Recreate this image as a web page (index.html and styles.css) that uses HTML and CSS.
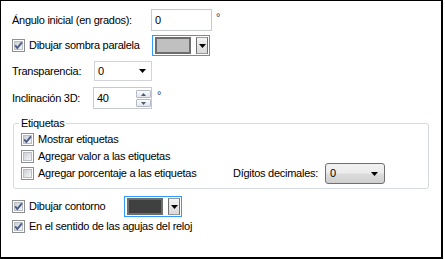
FILE: index.html
```html
<!DOCTYPE html>
<html>
<head>
<meta charset="utf-8">
<link rel="stylesheet" href="styles.css">
</head>
<body>
<svg class="defs" width="0" height="0">
  <defs>
    <linearGradient id="cbg" x1="0" y1="0" x2="1" y2="1">
      <stop offset="0" stop-color="#c9cdd3"/>
      <stop offset="1" stop-color="#f7f8f9"/>
    </linearGradient>
  </defs>
</svg>
<div class="panel">
  <div class="row r1">
    <span class="lbl l1">Ángulo inicial (en grados):</span>
    <div class="textbox tb1">0</div>
    <span class="deg">°</span>
  </div>

  <div class="row r2">
    <div class="chk l2">
      <svg class="cb" width="13" height="13" viewBox="0 0 13 13"><rect x="0.5" y="0.5" width="12" height="12" fill="#fff" stroke="#8e8f8f"/><rect x="2.5" y="2.5" width="8" height="8" fill="url(#cbg)" stroke="#b9bec6"/><path d="M3.2 6.4 L5.3 9 L9.9 3.3" fill="none" stroke="#4b5c87" stroke-width="1.9"/></svg>
      <span>Dibujar sombra paralela</span>
    </div>
    <div class="picker">
      <span class="swatch sw-light"></span>
      <span class="pbtn"><svg width="7" height="4" viewBox="0 0 7 4"><path d="M0 0H7L3.5 4Z" fill="#000"/></svg></span>
    </div>
  </div>

  <div class="row r3">
    <span class="lbl l3">Transparencia:</span>
    <div class="combo">
      <span>0</span>
      <svg width="7" height="4" viewBox="0 0 7 4"><path d="M0 0H7L3.5 4Z" fill="#000"/></svg>
    </div>
  </div>

  <div class="row r4">
    <span class="lbl l4">Inclinación 3D:</span>
    <div class="spin">
      <span class="spin-val">40</span>
      <div class="spin-btns">
        <span class="sbtn"><svg width="5" height="3" viewBox="0 0 5 3"><path d="M0 3H5L2.5 0Z" fill="#4a5a73"/></svg></span>
        <span class="sbtn"><svg width="5" height="3" viewBox="0 0 5 3"><path d="M0 0H5L2.5 3Z" fill="#4a5a73"/></svg></span>
      </div>
    </div>
    <span class="deg deg2">°</span>
  </div>

  <fieldset class="group">
    <legend>Etiquetas</legend>
    <div class="grow">
      <div class="chk">
        <svg class="cb" width="13" height="13" viewBox="0 0 13 13"><rect x="0.5" y="0.5" width="12" height="12" fill="#fff" stroke="#8e8f8f"/><rect x="2.5" y="2.5" width="8" height="8" fill="url(#cbg)" stroke="#b9bec6"/><path d="M3.2 6.4 L5.3 9 L9.9 3.3" fill="none" stroke="#4b5c87" stroke-width="1.9"/></svg>
        <span>Mostrar etiquetas</span>
      </div>
    </div>
    <div class="grow">
      <div class="chk">
        <svg class="cb" width="13" height="13" viewBox="0 0 13 13"><rect x="0.5" y="0.5" width="12" height="12" fill="#fff" stroke="#8e8f8f"/><rect x="2.5" y="2.5" width="8" height="8" fill="url(#cbg)" stroke="#b9bec6"/></svg>
        <span>Agregar valor a las etiquetas</span>
      </div>
    </div>
    <div class="grow">
      <div class="chk">
        <svg class="cb" width="13" height="13" viewBox="0 0 13 13"><rect x="0.5" y="0.5" width="12" height="12" fill="#fff" stroke="#8e8f8f"/><rect x="2.5" y="2.5" width="8" height="8" fill="url(#cbg)" stroke="#b9bec6"/></svg>
        <span>Agregar porcentaje a las etiquetas</span>
      </div>
      <span class="lbl ldec">Dígitos decimales:</span>
      <div class="ddl">
        <span>0</span>
        <svg width="7" height="4" viewBox="0 0 7 4"><path d="M0 0H7L3.5 4Z" fill="#000"/></svg>
      </div>
    </div>
  </fieldset>

  <div class="row r5">
    <div class="chk l5">
      <svg class="cb" width="13" height="13" viewBox="0 0 13 13"><rect x="0.5" y="0.5" width="12" height="12" fill="#fff" stroke="#8e8f8f"/><rect x="2.5" y="2.5" width="8" height="8" fill="url(#cbg)" stroke="#b9bec6"/><path d="M3.2 6.4 L5.3 9 L9.9 3.3" fill="none" stroke="#4b5c87" stroke-width="1.9"/></svg>
      <span>Dibujar contorno</span>
    </div>
    <div class="picker">
      <span class="swatch sw-dark"></span>
      <span class="pbtn"><svg width="7" height="4" viewBox="0 0 7 4"><path d="M0 0H7L3.5 4Z" fill="#000"/></svg></span>
    </div>
  </div>

  <div class="row r6">
    <div class="chk">
      <svg class="cb" width="13" height="13" viewBox="0 0 13 13"><rect x="0.5" y="0.5" width="12" height="12" fill="#fff" stroke="#8e8f8f"/><rect x="2.5" y="2.5" width="8" height="8" fill="url(#cbg)" stroke="#b9bec6"/><path d="M3.2 6.4 L5.3 9 L9.9 3.3" fill="none" stroke="#4b5c87" stroke-width="1.9"/></svg>
      <span>En el sentido de las agujas del reloj</span>
    </div>
  </div>
</div>
</body>
</html>
```

FILE: styles.css
```css
html, body {
  margin: 0;
  padding: 0;
  background: #fff;
}
body {
  font-family: "Liberation Sans", Arial, sans-serif;
  font-size: 11px;
  letter-spacing: -0.27px;
  line-height: 13px;
  color: #000;
}
.defs {
  display: block;
  width: 0;
  height: 0;
  overflow: hidden;
}
.panel {
  width: 443px;
  height: 259px;
  box-sizing: border-box;
  border: 1px solid #000;
  border-right-width: 2px;
  border-bottom-width: 2px;
  padding: 8px 0 0 11px;
}
.row {
  display: flex;
  align-items: center;
}
.lbl {
  white-space: nowrap;
}
.r1 { height: 22px; }
.l1 { width: 139px; }
.textbox {
  box-sizing: border-box;
  border: 1px solid #c6c9ce;
  background: #fff;
  height: 22px;
  display: flex;
  align-items: center;
  padding-left: 3px;
}
.tb1 { width: 61px; }
.deg {
  align-self: flex-start;
  margin-left: 4px;
  margin-top: 2px;
  color: #24365a;
  font-size: 11px;
}
.r2 { height: 21px; margin-top: 4px; }
.chk {
  display: flex;
  align-items: center;
  white-space: nowrap;
}
.cb {
  display: block;
  flex: none;
  margin-right: 4px;
}
.l2 { width: 140px; }
.picker {
  box-sizing: border-box;
  width: 58px;
  height: 21px;
  border: 1px solid #3399ff;
  padding: 1px 1px 1px 2px;
  display: flex;
  align-items: center;
  background: #fff;
}
.swatch {
  box-sizing: border-box;
  width: 37px;
  height: 17px;
  border: 2px solid #6d6d6d;
}
.sw-light { background: #c0c0c0; }
.sw-dark { background: #404040; }
.pbtn {
  box-sizing: border-box;
  width: 12px;
  height: 17px;
  margin-left: 5px;
  border: 1px solid #6f6f6f;
  border-top-color: #9a9a9a;
  border-bottom-color: #9a9a9a;
  background: linear-gradient(#f4f4f4, #d9d9d9);
  display: flex;
  align-items: center;
  justify-content: center;
}
.r3 { height: 20px; margin-top: 5px; }
.l3 { width: 82px; }
.combo {
  box-sizing: border-box;
  width: 58px;
  height: 20px;
  border: 1px solid #d0d3d7;
  display: flex;
  align-items: center;
  justify-content: space-between;
  padding: 0 5px 0 3px;
}
.r4 { height: 22px; margin-top: 6px; }
.l4 { width: 81px; }
.spin {
  box-sizing: border-box;
  width: 59px;
  height: 22px;
  border: 1px solid #c6c9ce;
  display: flex;
  align-items: flex-start;
  justify-content: space-between;
  padding: 2px 0 0 3px;
}
.spin-val {
  margin-top: 2px;
}
.spin-btns {
  display: flex;
  flex-direction: column;
  gap: 1px;
}
.sbtn {
  box-sizing: border-box;
  width: 15px;
  height: 8px;
  border: 1px solid #b4bbc6;
  border-radius: 1px;
  background: linear-gradient(#fdfdfe, #e1e5eb);
  display: flex;
  align-items: center;
  justify-content: center;
}
.deg2 { margin-left: 5px; }
.group {
  box-sizing: border-box;
  width: 416px;
  margin: 8px 0 0 1px;
  padding: 1px 0 6px 7px;
  border: 1px solid #d5dbe1;
  border-radius: 3px;
  min-inline-size: 0;
}
.group legend {
  padding: 0 2px;
  margin-left: -2px;
  line-height: 13px;
}
.grow {
  height: 17px;
  display: flex;
  align-items: center;
}
.ldec {
  margin-left: auto;
  margin-right: 7px;
}
.ddl {
  box-sizing: border-box;
  width: 60px;
  height: 21px;
  margin-right: 43px;
  border: 1px solid #707070;
  border-radius: 3px;
  background: linear-gradient(#f2f2f2 0%, #ebebeb 48%, #dcdcdc 52%, #cfcfcf 100%);
  display: flex;
  align-items: center;
  justify-content: space-between;
  padding: 0 6px 0 4px;
}
.r5 { height: 21px; margin-top: 7px; }
.l5 { width: 112px; }
.r6 { height: 17px; margin-top: 1px; }
```
